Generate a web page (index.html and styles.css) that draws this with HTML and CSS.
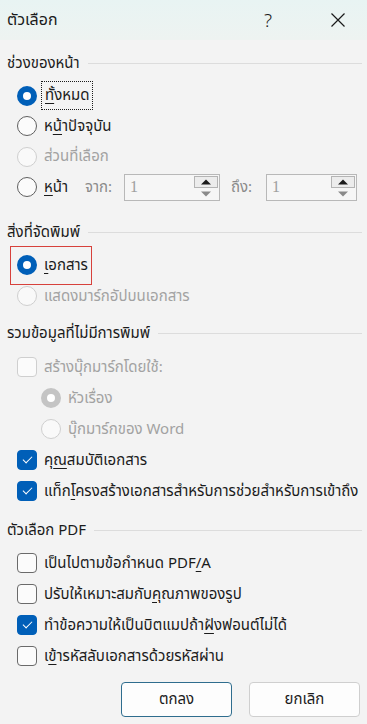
FILE: index.html
```html
<!DOCTYPE html>
<html lang="th">
<head>
<meta charset="UTF-8">
<meta name="viewport" content="width=device-width, initial-scale=1.0">
<title>ตัวเลือก</title>
<link rel="stylesheet" href="styles.css">
</head>
<body>
<div class="dialog">
  <div class="titlebar">
    <span class="title">ตัวเลือก</span>
    <span class="help">?</span>
    <span class="close">
      <svg width="16" height="16" viewBox="0 0 16 16"><path d="M1.5 1.5 L14.5 14.5 M14.5 1.5 L1.5 14.5" stroke="#1a1a1a" stroke-width="1.2" fill="none"/></svg>
    </span>
  </div>

  <!-- ช่วงของหน้า -->
  <div class="group g-range">
    <div class="legend">ช่วงของหน้า</div>
    <div class="rows tight">
      <div class="row"><span class="radio on"></span><span class="focus"><u>ทั้</u>งหมด</span></div>
      <div class="row"><span class="radio"></span><span>ห<u>น้</u>าปัจจุบัน</span></div>
      <div class="row off"><span class="radio"></span><span>ส่วนที่เลือก</span></div>
      <div class="row">
        <span class="radio"></span><span class="pages"><u>ห</u>น้า</span>
        <span class="spin-label">จาก:</span>
        <span class="spin"><span class="spin-val">1</span><span class="spin-btns"><span class="up"></span><span class="down"></span></span></span>
        <span class="spin-label to">ถึง:</span>
        <span class="spin"><span class="spin-val">1</span><span class="spin-btns"><span class="up"></span><span class="down"></span></span></span>
      </div>
    </div>
  </div>

  <!-- สิ่งที่จัดพิมพ์ -->
  <div class="group g-what">
    <div class="legend">สิ่งที่จัดพิมพ์</div>
    <div class="rows">
      <div class="row"><span class="mark"><span class="radio on"></span><span><u>เ</u>อกสาร</span></span></div>
      <div class="row off"><span class="radio"></span><span>แสดงมาร์กอัปบนเอกสาร</span></div>
    </div>
  </div>

  <!-- รวมข้อมูลที่ไม่มีการพิมพ์ -->
  <div class="group g-info">
    <div class="legend">รวมข้อมูลที่ไม่มีการพิมพ์</div>
    <div class="rows">
      <div class="row off"><span class="check"></span><span>สร้างบุ๊กมาร์กโดยใช้:</span></div>
      <div class="row off sub"><span class="radio on"></span><span>หัวเรื่อง</span></div>
      <div class="row off sub"><span class="radio"></span><span>บุ๊กมาร์กของ Word</span></div>
      <div class="row"><span class="check on"></span><span>คุ<u>ณ</u>สมบัติเอกสาร</span></div>
      <div class="row"><span class="check on"></span><span>แท็ก<u>โ</u>ครงสร้างเอกสารสำหรับการช่วยสำหรับการเข้าถึง</span></div>
    </div>
  </div>

  <!-- ตัวเลือก PDF -->
  <div class="group g-pdf">
    <div class="legend">ตัวเลือก PDF</div>
    <div class="rows">
      <div class="row"><span class="check"></span><span>เป็นไปตามข้อกำหนด PDF<u>/</u>A</span></div>
      <div class="row"><span class="check"></span><span>ปรับให้เหมาะสมกับ<u>ค</u>ุณภาพของรูป</span></div>
      <div class="row"><span class="check on"></span><span>ทำข้อความให้เป็นบิตแมปถ้า<u>ฝั</u>งฟอนต์ไม่ได้</span></div>
      <div class="row"><span class="check"></span><span>เ<u>ข้</u>ารหัสลับเอกสารด้วยรหัสผ่าน</span></div>
    </div>
  </div>

  <div class="buttons">
    <button class="btn default">ตกลง</button>
    <button class="btn">ยกเลิก</button>
  </div>
</div>
</body>
</html>
```

FILE: styles.css
```css
html, body {
  margin: 0;
  padding: 0;
}

body {
  background: #f3f3f3;
  font-family: "Noto Sans Thai", "Leelawadee UI", "Noto Sans", "DejaVu Sans", sans-serif;
  font-size: 15px;
  color: #1b1b1b;
}

.dialog {
  width: 367px;
  height: 724px;
  overflow: hidden;
}

/* title bar */
.titlebar {
  height: 40px;
  display: flex;
  align-items: center;
  padding-left: 7px;
  background: linear-gradient(#e8f4f3, #eef3f1);
}

.title {
  font-size: 16px;
  flex: 1;
}

.help {
  font-size: 19px;
  font-weight: 300;
  width: 20px;
  text-align: center;
  margin-right: 52px;
  font-family: "Noto Sans", sans-serif;
}

.close {
  width: 16px;
  height: 16px;
  margin-right: 21px;
  display: flex;
}

/* groups */
.legend {
  display: flex;
  align-items: center;
  height: 24px;
  padding-left: 7px;
  padding-right: 5px;
  color: #1b1b1b;
}

.legend::after {
  content: "";
  flex: 1;
  height: 1px;
  background: #dcdcdc;
  margin-left: 8px;
}

.g-range { margin-top: 11px; }
.g-what { margin-top: 17.5px; }
.g-info { margin-top: 9.5px; }
.g-pdf { margin-top: 11.5px; }

.rows { margin-top: 5.5px; }
.g-info .rows { margin-top: 6.5px; }

.row {
  height: 31px;
  display: flex;
  align-items: center;
  padding-left: 17px;
  white-space: nowrap;
}

.rows.tight .row { height: 30.5px; }

.row.sub { padding-left: 41px; }

.row.off { color: #a2a2a2; }

.row u { text-underline-offset: 3px; }

/* radio */
.radio {
  width: 18px;
  height: 18px;
  border: 1px solid #5f5f5f;
  border-radius: 50%;
  background: #fbfbfb;
  margin-right: 7px;
  flex: none;
  box-sizing: content-box;
}

.radio.on {
  width: 8px;
  height: 8px;
  border: 6px solid #005fb8;
  background: #fff;
}

.off .radio {
  border-color: #cfcfcf;
  background: #f9f9f9;
}

.off .radio.on {
  border-color: #c4c4c4;
  background: #fff;
}

/* checkbox */
.check {
  width: 18px;
  height: 18px;
  border: 1px solid #6a6a6a;
  border-radius: 4px;
  background: #fbfbfb;
  margin-right: 7px;
  flex: none;
  position: relative;
}

.off .check {
  border-color: #cfcfcf;
}

.check.on {
  background: #005fb8;
  border-color: #005fb8;
}

.check.on::after {
  content: "";
  position: absolute;
  left: 5px;
  top: 3px;
  width: 8px;
  height: 4px;
  border-left: 1.2px solid #fff;
  border-bottom: 1.2px solid #fff;
  transform: translate(0, 2px) rotate(-45deg);
}

/* focus rectangle */
.focus {
  outline: 1px dotted #1b1b1b;
  outline-offset: 2px;
  padding: 0 1px;
}

/* red mark */
.mark {
  display: inline-flex;
  align-items: center;
  border: 1px solid #d7413b;
  padding: 7px 3px 7px 6px;
  margin: -8px 0 -8px -7px;
}

/* page spinners */
.pages { width: 41px; }

.spin-label {
  color: #8a8a8a;
  width: 39px;
}

.spin-label.to {
  margin-left: 11px;
  width: 35px;
}

.spin {
  display: flex;
  align-items: center;
  justify-content: space-between;
  width: 88px;
  height: 25px;
  border: 1px solid #b8b8b8;
  background: #f6f6f6;
  box-sizing: content-box;
  padding: 0 1px 0 5px;
}

.spin + .spin-label + .spin { width: 83px; }

.spin-val {
  color: #a0a0a0;
  font-family: "Liberation Serif", serif;
  font-size: 16px;
}

.spin-btns {
  display: flex;
  flex-direction: column;
  width: 24px;
  height: 23px;
}

.up, .down {
  flex: 1;
  position: relative;
}

.up {
  border: 1px solid #b4b4b4;
  background: #ececec;
}

.up::after, .down::after {
  content: "";
  position: absolute;
  left: 50%;
  top: 50%;
  border-left: 5px solid transparent;
  border-right: 5px solid transparent;
  transform: translate(-50%, -50%);
}

.up::after { border-bottom: 5px solid #1b1b1b; }
.down::after { border-top: 5px solid #8a8a8a; }

/* buttons */
.buttons {
  display: flex;
  justify-content: flex-end;
  gap: 17px;
  margin-top: 10.5px;
  padding-right: 7px;
}

.btn {
  width: 111px;
  height: 35px;
  border: 1px solid #cfcfcf;
  border-radius: 4px;
  background: #fdfdfd;
  font-family: inherit;
  font-size: 15px;
  color: #1b1b1b;
  padding: 0;
}

.btn.default {
  border-color: #2f6d8e;
}
```
